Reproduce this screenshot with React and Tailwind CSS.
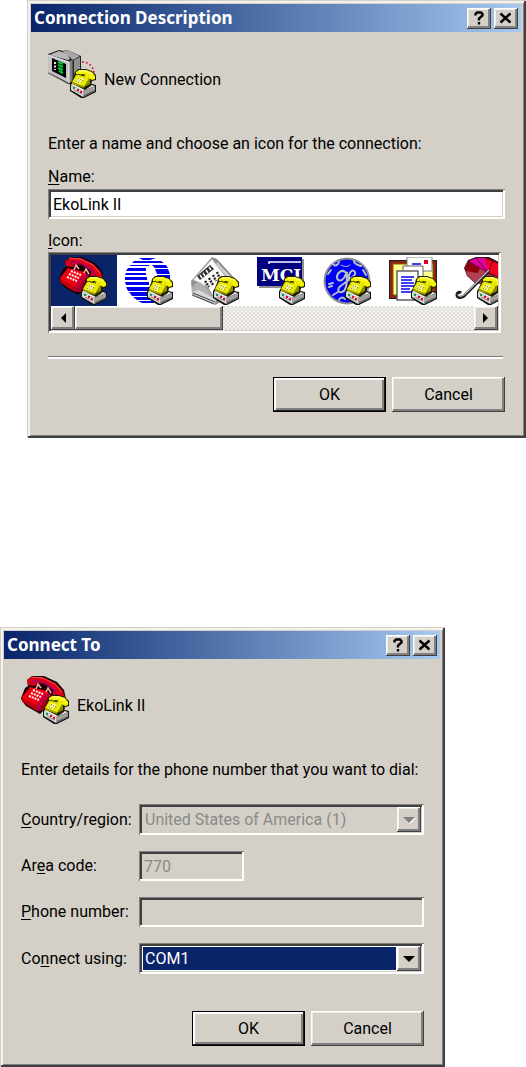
import { useState } from "react";

const RAISED =
  "shadow-[inset_-1px_-1px_0_#404040,inset_1px_1px_0_#ffffff,inset_-3px_-3px_0_#808080,inset_2px_2px_0_#efede9]";
const SUNKEN =
  "shadow-[inset_1px_1px_0_#808080,inset_-2px_-2px_0_#ffffff,inset_3px_3px_0_#404040,inset_-3px_-3px_0_#d4d0c8]";

// small yellow modem phone that sits on every connection icon
const YellowPhone = () => (
  <g>
    <path d="M22 34l4-4 22 5v7l-12 6h-3l-11-7z" fill="#101010" />
    <path d="M23 35l4-4 20 5-12 5z" fill="#f0f0f0" />
    <path d="M23 35l12 6v6l-12-7z" fill="#d8d8d8" />
    <path d="M35 41l12-5v5l-12 6z" fill="#a0a0a0" />
    <path d="M36 45l11-5v1l-11 6z" fill="#606060" />
    <path d="M25 37h2v2h-2z" fill="#00a040" />
    <path d="M29 39h2v2h-2zM32 41h2v2h-2z" fill="#f00020" />
    <path d="M26 40l8 4" stroke="#808080" strokeWidth="1" />
    <path d="M23 33l3-7 1-4 3-3h8l6 2 4 4v5l-4 1-1 5-6 4z" fill="#202000" />
    <path d="M24 32l4-7h12l2 3-6 9z" fill="#e8e800" />
    <path d="M36 37l5-9 1 1v5z" fill="#8c8c00" />
    <path d="M24 32l12 4v2l-12-4z" fill="#a0a000" />
    <path d="M28 22l3-2h7l6 2 3 4v3l-3 1-3-2v-2l-6-2-3 1-4-1z" fill="#f4f400" />
    <path d="M31 21h7l6 3" stroke="#ffffa0" fill="none" />
    <path d="M30 24l2 1 5 1" stroke="#404000" fill="none" />
    <path d="M30 27l6 2-4 5-5-2z" fill="#ffff90" />
    <path d="M31 28l-3 4M33 29l-3 4M35 30l-2 3" stroke="#606000" strokeWidth="1" strokeDasharray="1 1" fill="none" />
  </g>
);

const RedPhone = () => (
  <g>
    <path d="M0 22l4-10 3-2-1-6 5-4 12 0 13 6 7 8 2 9-5 3-18 9-3 3-14-8-4-5z" fill="#180000" />
    <path d="M1 21l8-10 17 4 5 7-8 6-7 7-14-9z" fill="#f00010" />
    <path d="M16 35l8-12 7-5 2 3-3 9-8 5z" fill="#a00020" />
    <path d="M1 22l16 8 0 5-15-9z" fill="#c00010" />
    <path d="M6 4l5-3 10 0 13 6 7 7 3 7-6 2-6-3v-6l-9-6-7-1-2 3-7-1z" fill="#e00018" />
    <path d="M10 1l12 1 12 6 7 8" stroke="#ff5060" fill="none" />
    <path d="M14 4l13 5 7 6 2 6M10 8l4-4" stroke="#800080" strokeWidth="1.2" fill="none" />
    <path d="M17 30v5M17 30l6-9 7-4" stroke="#800080" strokeWidth="1.2" fill="none" />
    <path d="M15 13l2-5 3 4M25 16l2-4 3 5" stroke="#ffb0b0" strokeWidth="1.5" fill="none" />
    <path d="M12 14l10 4M10 17l10 4M8 20l10 4" stroke="#fff" strokeWidth="2" strokeDasharray="2 1" fill="none" />
  </g>
);

const Computer = () => (
  <g>
    <path d="M0 4l11-4 4 1 4-1 14 6v20l-8 8-5 0-20-12z" fill="#202020" />
    <path d="M1 5l10-4 8 3 3 5-2 1z" fill="#b8b8b8" />
    <path d="M14 2l5-2 13 6-7 4-6-5z" fill="#a8a8a8" />
    <path d="M0 5l21 7v21l-21-11z" fill="#c4c4c4" />
    <path d="M21 12l4-3v22l-4 2z" fill="#808080" />
    <path d="M26 10l6-3v18l-6 5z" fill="#909090" />
    <path d="M25 10v21" stroke="#303030" />
    <path d="M4 8l14 6v14l-14-7z" fill="#000" />
    <path d="M7 12v8" stroke="#e0e0e0" strokeWidth="2" strokeDasharray="2 1.5" />
    <path d="M10 12l5 2M10 15l5 2M10 18l5 2M11 21l4 2" stroke="#00c830" strokeWidth="2" />
    <path d="M0 5l21 7v21" stroke="#f0f0f0" fill="none" />
    <path d="M0 23l21 11" stroke="#606060" fill="none" />
    <path d="M34 12c7 0 12 5 12 12" stroke="#f00020" strokeWidth="1.6" strokeDasharray="1.6 2.4" fill="none" />
  </g>
);

const Globe = () => (
  <g fill="#0000f0">
    <path d="M14 1h17l-6 2h-7zM9 4h27l3 2H7zM6 8h18v1H4zM27 8h14l2 3H30zM3 11h18v3H1zM30 12h13l2 5H32zM1 16h20v2H0zM0 20h22v3H0zM0 25h24v3H1zM1 30h24v4H3zM4 35h20v4H7zM8 40h17v3H12zM13 44h16v2H17zM32 18h13v4H32z" />
  </g>
);

const Newspaper = () => (
  <g>
    <path d="M0 24L21 0l5 2 22 24-20 20-4 2-23-11z" fill="#909090" />
    <path d="M26 5l20 20-4 4-18-18z" fill="#d0d0d0" />
    <path d="M29 8l16 16M27 11l15 15" stroke="#808080" strokeDasharray="2 1" />
    <path d="M1 35l7-4 17 11-1 5-22-10z" fill="#d8d8d8" />
    <path d="M1 38l22 9M2 36l22 9" stroke="#404040" fill="none" />
    <path d="M1 30l6-6 18 16-1 2-16-9-7 2z" fill="#b0b0b0" />
    <path d="M2 23L21 2l14 18-13 20-5-9-8-5z" fill="#fafafa" stroke="#b0b0b0" />
    <path d="M6 19L19 8l4 4-14 11z" fill="#303030" />
    <path d="M9 18l2 3M12 16l2 3M15 13l2 3M18 10l2 3" stroke="#fff" strokeWidth="1.4" />
    <path d="M14 24l4 6M18 21l4 7M22 18l3 6M26 15l3 7" stroke="#202020" strokeWidth="2.4" strokeDasharray="2 1" />
    <path d="M14 27l8 12" stroke="#909090" fill="none" />
  </g>
);

const Billboard = () => (
  <g>
    <path d="M2 2h45v29H2z" fill="#909090" />
    <path d="M0 0h45v29H0z" fill="#000080" />
    <path d="M12 7V5h32" stroke="#fff" strokeWidth="1.5" fill="none" />
    <text x="4" y="24" fontSize="17" fontWeight="700" fontFamily="DejaVu Serif, serif" fill="#fff">
      MCI
    </text>
  </g>
);

const Monogram = () => (
  <g>
    <circle cx="24" cy="24" r="23.5" fill="#909090" />
    <circle cx="24" cy="24" r="21.5" fill="#0000f8" />
    <g stroke="#b8c0c8" strokeWidth="2" fill="none" strokeLinecap="round">
      <path d="M22 15c-3-3-8 1-8 5s4 5 7 1l3-6c0 9 0 19-5 20s-5-4 0-7l8-6" />
      <path d="M26 22c5-2 8-6 5-8s-6 4-5 8 5 4 8 0" />
      <path d="M10 7c2 3 5 1 6-2M31 4c0 3 4 4 7 5M5 17l3-4M6 27l4-1M6 30l3-1M10 38l5-3M16 43c1-3 4-3 6-1M40 13l3 5" />
      <path d="M18 8c3 2 7 2 9 0" strokeWidth="1" />
    </g>
  </g>
);

const Pinboard = () => (
  <g>
    <path d="M0 3h48v39H0z" fill="#202020" />
    <path d="M1 4h46v37H1z" fill="#902010" />
    <path d="M4 7h40v31H4z" fill="#ffff90" stroke="#806000" />
    <path d="M18 0h25v14H18z" fill="#fff" stroke="#808080" />
    <path d="M35 3h4v4h-4z" fill="#e00020" />
    <path d="M23 7h9" stroke="#0000f0" strokeWidth="1.5" />
    <path d="M14 9h20v26H14z" fill="#fff" stroke="#606060" />
    <path d="M8 14h21v29H8z" fill="#fff" stroke="#606060" strokeWidth="1.5" />
    <path d="M12 20h13M12 23h11M12 26h13M12 29h13M12 32h9M12 35h13" stroke="#0000f0" strokeWidth="1.5" />
  </g>
);

const Umbrella = () => (
  <g>
    <path d="M9 11l4-8 8-3h13l14 7v34l-7-9-12-5-8 0-9-8z" fill="#401020" />
    <path d="M10 10l3-5 20 11-3 12-9-2-9-7z" fill="#b04050" />
    <path d="M10 10l3-5 12 6-2 5-12-2z" fill="#900010" />
    <path d="M14 4l7-3h9l5 12-3 2z" fill="#e000a0" />
    <path d="M30 1l18 8v12l-14-5z" fill="#f00020" />
    <path d="M32 17l16 4v17l-9-9-9-2z" fill="#c03050" />
    <path d="M21 1l12 15 5-13" stroke="#600010" fill="none" />
    <path d="M34 14L11 37c-3 4-9 5-9 1 0-3 3-3 4-2" stroke="#202020" strokeWidth="3" fill="none" />
    <path d="M34 13L11 36c-3 4-8 4-8 1" stroke="#c0c0c0" strokeWidth="1.2" fill="none" />
  </g>
);

const ConnectionIcon = ({ art: Art }) => (
  <svg className="size-12 shrink-0" viewBox="0 0 48 48" aria-hidden="true">
    <Art />
    <YellowPhone />
  </svg>
);

const icons = [
  { name: "Red telephone", art: RedPhone },
  { name: "Striped globe", art: Globe },
  { name: "Newspaper", art: Newspaper },
  { name: "MCI", art: Billboard },
  { name: "Monogram", art: Monogram },
  { name: "Pinboard", art: Pinboard },
  { name: "Umbrella", art: Umbrella },
];

const Arrow = ({ d, className = "" }) => (
  <svg className={`size-3 ${className}`} viewBox="0 0 12 12" fill="currentColor" aria-hidden="true">
    <path d={d} />
  </svg>
);

const TitleButton = ({ label, children }) => (
  <button
    type="button"
    aria-label={label}
    className={`flex h-[21px] w-6 items-center justify-center bg-[#d4d0c8] ${RAISED}`}>
    <svg className="h-4 w-4" viewBox="0 0 16 16" fill="none" stroke="#000" aria-hidden="true">
      {children}
    </svg>
  </button>
);

const Dialog = ({ title, className, children }) => (
  <section
    aria-label={title}
    className={`bg-[#d4d0c8] p-1 pr-[5px] shadow-[inset_1px_1px_0_#d4d0c8,inset_-2px_-2px_0_#404040,inset_3px_3px_0_#f4f2ef,inset_-3px_-3px_0_#808080] ${className}`}>
    <header className="flex h-7 items-center bg-linear-to-r from-[#0a246a] to-[#a6caf0] px-[3px]">
      <h2 className="flex-1 font-['Noto_Sans',sans-serif] text-[17px] leading-5 font-bold text-white">
        {title}
      </h2>
      <div className="flex gap-[3px]">
        <TitleButton label="Help">
          <path d="M4.5 5.5V4L6 2.5h4L11.5 4v1.5L8 8.5v2M8 12v2.5" strokeWidth="2.4" />
        </TitleButton>
        <TitleButton label="Close">
          <path d="M2.5 3.5l10 9M12.5 3.5l-10 9" strokeWidth="2.4" />
        </TitleButton>
      </div>
    </header>
    {children}
  </section>
);

const Buttons = () => (
  <div className="flex justify-end gap-[6px]">
    <button
      type="submit"
      className="h-[35px] w-[113px] border border-black bg-[#d4d0c8] shadow-[inset_-1px_-1px_0_#202020,inset_2px_2px_0_#ffffff,inset_-3px_-3px_0_#808080]">
      OK
    </button>
    <button type="button" className={`h-[35px] w-[113px] bg-[#d4d0c8] ${RAISED}`}>
      Cancel
    </button>
  </div>
);

const Key = ({ children }) => <span className="underline underline-offset-2">{children}</span>;

const ConnectionDescription = () => {
  const [name, setName] = useState("EkoLink II");
  const [selected, setSelected] = useState(0);

  return (
    <Dialog title="Connection Description" className="ml-[27px]">
      <form className="pt-[18px] pr-4 pb-[22px] pl-[17px]" onSubmit={(e) => e.preventDefault()}>
        <div className="flex items-center gap-2">
          <ConnectionIcon art={Computer} />
          <span className="pt-3">New Connection</span>
        </div>
        <p className="mt-[35px]">Enter a name and choose an icon for the connection:</p>
        <label htmlFor="name" className="mt-[11px] block">
          <Key>N</Key>ame:
        </label>
        <input
          id="name"
          value={name}
          onChange={(e) => setName(e.target.value)}
          className={`mt-px block h-[30px] w-full bg-white px-[5px] outline-none ${SUNKEN}`}
        />
        <div id="icon-label" className="mt-[11px]">
          <Key>I</Key>con:
        </div>
        <div className={`mr-1 bg-white p-[3px] ${SUNKEN}`}>
          <div role="listbox" aria-labelledby="icon-label" className="flex overflow-hidden">
            {icons.map((icon, i) => (
              <button
                key={icon.name}
                type="button"
                role="option"
                aria-label={icon.name}
                aria-selected={i === selected}
                onClick={() => setSelected(i)}
                className={`flex h-[51px] w-[66px] shrink-0 items-center pt-px pl-2 ${
                  i === selected ? "bg-[#0a246a]" : ""
                }`}>
                <ConnectionIcon art={icon.art} />
              </button>
            ))}
          </div>
          <div className="flex h-6 bg-[repeating-conic-gradient(#f4f2f0_0_25%,#dfdcd6_0_50%)] bg-[length:4px_4px]">
            <button
              type="button"
              aria-label="Scroll left"
              className={`flex w-6 items-center justify-center bg-[#d4d0c8] ${RAISED}`}>
              <Arrow d="M9 1v10L4 6z" />
            </button>
            <div className={`w-[148px] bg-[#d4d0c8] ${RAISED}`} />
            <button
              type="button"
              aria-label="Scroll right"
              className={`ml-auto flex w-6 items-center justify-center bg-[#d4d0c8] ${RAISED}`}>
              <Arrow d="M3 1v10l5-5z" />
            </button>
          </div>
        </div>
        <hr className="mt-[23px] mr-[2px] mb-[18px] h-[3px] border-t border-b-2 border-t-[#808080] border-b-white" />
        <Buttons />
      </form>
    </Dialog>
  );
};

const SelectBox = ({ id, active, children }) => (
  <div className={`flex h-[31px] p-[3px] ${active ? "bg-white" : ""} ${SUNKEN}`}>
    <select
      id={id}
      disabled={!active}
      className={`min-w-0 flex-1 appearance-none outline-none ${
        active ? "m-px bg-[#0a246a] pl-[2px] text-white" : "pl-[3px] text-[#8a8a88] opacity-100"
      }`}>
      {children}
    </select>
    <span className={`flex w-6 items-center justify-center bg-[#d4d0c8] ${RAISED}`}>
      <Arrow
        d="M0 3h12L6 9z"
        className={active ? "text-black" : "text-[#808080] drop-shadow-[1px_1px_0_#ffffff]"}
      />
    </span>
  </div>
);

const ConnectTo = () => (
  <Dialog title="Connect To" className="mt-[189px] mr-[81px]">
    <form className="pt-[17px] pr-4 pb-[17px] pl-[17px]" onSubmit={(e) => e.preventDefault()}>
      <div className="flex items-center gap-2">
        <ConnectionIcon art={RedPhone} />
        <span className="pt-3">EkoLink II</span>
      </div>
      <p className="mt-[35px]">Enter details for the phone number that you want to dial:</p>
      <div className="mt-[23px] mb-[37px] grid grid-cols-[118px_1fr] items-center gap-y-4">
        <label htmlFor="country">
          <Key>C</Key>ountry/region:
        </label>
        <SelectBox id="country">
          <option>United States of America (1)</option>
        </SelectBox>
        <label htmlFor="area">
          Ar<Key>e</Key>a code:
        </label>
        <input
          id="area"
          disabled
          defaultValue="770"
          className={`h-[30px] w-[105px] px-[5px] text-[#8a8a88] ${SUNKEN}`}
        />
        <label htmlFor="phone">
          <Key>P</Key>hone number:
        </label>
        <input id="phone" disabled className={`h-[30px] w-full px-[5px] ${SUNKEN}`} />
        <label htmlFor="port">
          Co<Key>n</Key>nect using:
        </label>
        <SelectBox id="port" active>
          <option>COM1</option>
        </SelectBox>
      </div>
      <Buttons />
    </form>
  </Dialog>
);

export default function App() {
  return (
    <main className="bg-white font-[Roboto,sans-serif] text-base leading-[22px] text-black">
      <ConnectionDescription />
      <ConnectTo />
    </main>
  );
}
